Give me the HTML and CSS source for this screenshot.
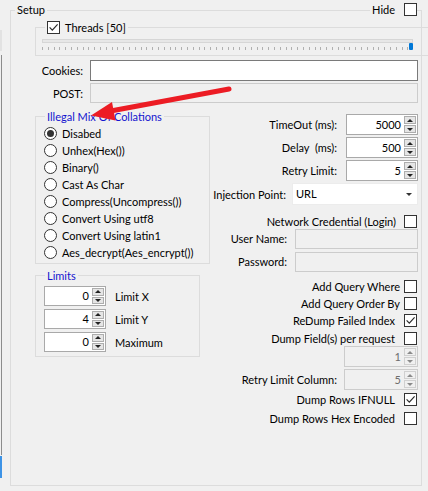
FILE: index.html
```html
<!DOCTYPE html>
<html>
<head>
<meta charset="utf-8">
<title>Setup</title>
<link rel="stylesheet" href="styles.css">
</head>
<body>
<div class="window">
  <div class="edge">
    <div class="edge-top"></div>
    <div class="edge-line"></div>
    <div class="edge-blue"></div>
  </div>

  <fieldset class="setup">
    <legend class="setup-title">Setup</legend>

    <fieldset class="threads">
      <legend class="threads-title"><span class="cb"><svg viewBox="0 0 11 11"><path d="M1.6 5.4 L4.3 8.2 L9.6 2.4"/></svg></span>Threads [50]</legend>
      <div class="slider">
        <div class="track"></div>
        <div class="ticks"></div>
        <div class="thumb"></div>
      </div>
    </fieldset>

    <div class="field-row cookies"><span class="field-label">Cookies:</span><div class="textbox"></div></div>
    <div class="field-row post"><span class="field-label">POST:</span><div class="textbox disabled"></div></div>

    <div class="columns">
      <div class="col-left">
        <fieldset class="group mix">
          <legend class="group-title">Illegal Mix Of Collations</legend>
          <div class="radio-row"><span class="radio on"></span>Disabed</div>
          <div class="radio-row"><span class="radio"></span>Unhex(Hex())</div>
          <div class="radio-row"><span class="radio"></span>Binary()</div>
          <div class="radio-row"><span class="radio"></span>Cast As Char</div>
          <div class="radio-row"><span class="radio"></span>Compress(Uncompress())</div>
          <div class="radio-row"><span class="radio"></span>Convert Using utf8</div>
          <div class="radio-row"><span class="radio"></span>Convert Using latin1</div>
          <div class="radio-row"><span class="radio"></span>Aes_decrypt(Aes_encrypt())</div>
        </fieldset>

        <fieldset class="group limits">
          <legend class="group-title">Limits</legend>
          <div class="limit-row"><div class="spin limit-spin"><span class="spin-val">0</span><span class="spin-btns"><i class="up"></i><i class="down"></i></span></div><span>Limit X</span></div>
          <div class="limit-row"><div class="spin limit-spin"><span class="spin-val">4</span><span class="spin-btns"><i class="up"></i><i class="down"></i></span></div><span>Limit Y</span></div>
          <div class="limit-row"><div class="spin limit-spin"><span class="spin-val">0</span><span class="spin-btns"><i class="up"></i><i class="down"></i></span></div><span>Maximum</span></div>
        </fieldset>
      </div>

      <div class="col-right">
        <div class="r-row r-spin r-timeout"><span>TimeOut (ms):</span><div class="spin"><span class="spin-val">5000</span><span class="spin-btns"><i class="up"></i><i class="down"></i></span></div></div>
        <div class="r-row r-spin r-next"><span>Delay&nbsp; (ms):</span><div class="spin"><span class="spin-val">500</span><span class="spin-btns"><i class="up"></i><i class="down"></i></span></div></div>
        <div class="r-row r-spin r-next"><span>Retry Limit:</span><div class="spin"><span class="spin-val">5</span><span class="spin-btns"><i class="up"></i><i class="down"></i></span></div></div>
        <div class="r-row r-inject"><span>Injection Point:</span><div class="combo"><span class="combo-text">URL</span><span class="combo-btn"></span></div></div>
        <div class="r-row r-check r-netcred"><span>Network Credential (Login)</span><span class="cb"></span></div>
        <div class="r-row r-cred r-user"><span>User Name:</span><div class="textbox disabled cred-box"></div></div>
        <div class="r-row r-cred r-next"><span>Password:</span><div class="textbox disabled cred-box"></div></div>
        <div class="r-row r-check tight r-where"><span>Add Query Where</span><span class="cb"></span></div>
        <div class="r-row r-check tight r-order"><span>Add Query Order By</span><span class="cb"></span></div>
        <div class="r-row r-check r-redump"><span>ReDump Failed Index</span><span class="cb"><svg viewBox="0 0 11 11"><path d="M1.6 5.4 L4.3 8.2 L9.6 2.4"/></svg></span></div>
        <div class="r-row r-check r-perreq"><span>Dump Field(s) per request</span><span class="cb"></span></div>
        <div class="r-row r-spin r-one"><div class="spin off wide"><span class="spin-val">1</span><span class="spin-btns"><i class="up"></i><i class="down"></i></span></div></div>
        <div class="r-row r-spin r-next r-retrycol"><span>Retry Limit Column:</span><div class="spin off wide"><span class="spin-val">5</span><span class="spin-btns"><i class="up"></i><i class="down"></i></span></div></div>
        <div class="r-row r-check r-ifnull"><span>Dump Rows IFNULL</span><span class="cb"><svg viewBox="0 0 11 11"><path d="M1.6 5.4 L4.3 8.2 L9.6 2.4"/></svg></span></div>
        <div class="r-row r-check r-hex"><span>Dump Rows Hex Encoded</span><span class="cb"></span></div>
      </div>
    </div>
  </fieldset>

  <label class="hide-toggle"><span>Hide</span><span class="cb"></span></label>

  <svg class="arrow" viewBox="0 0 428 491" width="428" height="491">
    <line x1="229" y1="89" x2="108" y2="111.5" stroke="#ec1c24" stroke-width="5" stroke-linecap="round"/>
    <polygon points="91,115.5 112,102 115.5,120.5" fill="#ec1c24"/>
  </svg>
</div>
</body>
</html>
```

FILE: styles.css
```css
* { box-sizing: border-box; }

html, body {
  margin: 0;
  padding: 0;
}

body {
  background: #f0f0f0;
  font-family: Lato, "Liberation Sans", sans-serif;
  font-size: 11px;
  color: #000;
  width: 428px;
  height: 491px;
  overflow: hidden;
}

.window {
  position: relative;
  display: flex;
  width: 428px;
  height: 491px;
}

/* cut-off control on the left edge */
.edge {
  width: 10px;
  flex: none;
  display: flex;
  flex-direction: column;
}
.edge-top {
  margin-top: 30px;
  width: 2px;
  height: 21px;
  background: #e2e2e2;
}
.edge-line {
  margin-top: 4px;
  margin-left: 1px;
  width: 1px;
  height: 400px;
  background: #8c8c8c;
}
.edge-blue {
  margin-top: 1px;
  width: 2px;
  height: 22px;
  background: #3d93e6;
}

/* group boxes */
fieldset {
  margin: 0;
  padding: 0;
  min-width: 0;
  border: 1px solid #dcdcdc;
}

.setup {
  margin-top: 4px;
  width: 412px;
  height: 482px;
  flex: none;
}
.setup-title {
  margin-left: 4px;
  padding: 0 2px;
  line-height: 12px;
}

.threads {
  margin: 5px 0 0 24px;
  width: 400px;
  height: 35px;
}
.threads-title {
  margin-left: 9px;
  padding: 0 2px;
  display: flex;
  align-items: center;
  gap: 5px;
  height: 13px;
  line-height: 13px;
}

.slider {
  position: relative;
  margin-left: 6px;
  width: 371px;
  height: 21px;
}
.track {
  margin-top: 5px;
  height: 4px;
  border: 1px solid #d6d6d6;
  background: #e7e7e7;
}
.ticks {
  margin-top: 4px;
  height: 3px;
  background: repeating-linear-gradient(to right, #b0b0b0 0 1px, transparent 1px 5.8px);
}
.thumb {
  position: absolute;
  right: 0;
  top: 4px;
  width: 4px;
  height: 7px;
  background: #0078d7;
  border-radius: 1px;
}

/* text fields */
.field-row {
  display: flex;
  align-items: center;
  gap: 7px;
}
.cookies { margin-top: 4px; }
.post { margin-top: 2px; }
.field-label {
  width: 72px;
  text-align: right;
}
.textbox {
  width: 328px;
  height: 21px;
  background: #fff;
  border: 1px solid #7a7a7a;
}
.textbox.disabled {
  background: #f0f0f0;
  border-color: #cccccc;
  height: 20px;
}

/* columns */
.columns {
  display: flex;
}
.col-left {
  flex: none;
  width: 198px;
  padding-left: 24px;
}
.group-title {
  margin-left: 9px;
  padding: 0 2px;
  line-height: 13px;
  color: #1414cf;
}
.mix {
  margin-top: 7px;
  width: 175px;
  padding: 2px 0 2px;
}
.radio-row {
  display: flex;
  align-items: center;
  gap: 5px;
  height: 17px;
  padding-left: 8px;
}
.radio {
  width: 13px;
  height: 13px;
  border-radius: 50%;
  border: 1px solid #333;
  background: #fff;
  display: flex;
  align-items: center;
  justify-content: center;
  flex: none;
}
.radio.on::after {
  content: "";
  width: 7px;
  height: 7px;
  border-radius: 50%;
  background: #333;
}

.limits {
  margin-top: 5px;
  width: 165px;
  padding: 4px 0 4px;
}
.limit-row {
  display: flex;
  align-items: center;
  gap: 9px;
  padding-left: 8px;
  height: 20px;
}
.limit-row + .limit-row { margin-top: 3px; }

/* spin boxes */
.spin {
  display: flex;
  width: 72px;
  height: 21px;
  border: 1px solid #a9a9a9;
  background: #fff;
  padding: 1px;
  flex: none;
}
.limit-spin {
  width: 62px;
  height: 20px;
}
.spin-val {
  flex: 1;
  text-align: right;
  padding-right: 3px;
  line-height: 17px;
}
.limit-spin .spin-val { line-height: 16px; }
.spin-btns {
  width: 12px;
  display: flex;
  flex-direction: column;
  gap: 1px;
}
.spin-btns i {
  flex: 1;
  background: #e5e5e5;
  border: 1px solid #adadad;
  display: flex;
  align-items: center;
  justify-content: center;
}
.spin-btns i::before {
  content: "";
  border-left: 3px solid transparent;
  border-right: 3px solid transparent;
}
.spin-btns .up::before { border-bottom: 3px solid #222; }
.spin-btns .down::before { border-top: 3px solid #222; }

.spin.off {
  background: #f0f0f0;
  border-color: #cccccc;
  color: #6d6d6d;
}
.spin.off .spin-btns i {
  background: #f0f0f0;
  border-color: #d0d0d0;
}
.spin.off .up::before { border-bottom-color: #8a8a8a; }
.spin.off .down::before { border-top-color: #8a8a8a; }
.spin.wide { width: 74px; }

/* right column */
.col-right {
  flex: 1;
  display: flex;
  flex-direction: column;
  padding-right: 3px;
}
.r-row {
  display: flex;
  justify-content: flex-end;
  align-items: center;
}
.r-spin {
  gap: 9px;
  height: 21px;
}
.r-timeout { margin-top: 11px; }
.r-next { margin-top: 2px; }
.r-retrycol { gap: 7px; }
.r-inject {
  margin-top: 2px;
  height: 22px;
  gap: 6px;
}
.combo {
  width: 126px;
  height: 22px;
  display: flex;
  background: #fff;
  border: 1px solid #ececec;
}
.combo-text {
  flex: 1;
  padding-left: 3px;
  line-height: 20px;
}
.combo-btn {
  width: 16px;
  display: flex;
  align-items: center;
  justify-content: center;
}
.combo-btn::before {
  content: "";
  border-left: 3px solid transparent;
  border-right: 3px solid transparent;
  border-top: 3px solid #333;
}

.r-check {
  height: 13px;
  gap: 9px;
  padding-right: 1px;
}
.r-check.tight { gap: 4px; }
.r-netcred { margin-top: 10px; gap: 8px; }
.r-cred {
  height: 21px;
  gap: 8px;
}
.cred-box {
  width: 123px;
  height: 21px;
}
.r-where { margin-top: 8px; }
.r-order { margin-top: 4px; }
.r-redump { margin-top: 4px; }
.r-perreq { margin-top: 5px; }
.r-one { margin-top: 1px; }
.r-ifnull { margin-top: 3px; }
.r-hex { margin-top: 6px; }

/* checkbox */
.cb {
  width: 13px;
  height: 13px;
  border: 1px solid #333;
  background: #fff;
  flex: none;
  display: inline-flex;
  align-items: center;
  justify-content: center;
}
.cb svg {
  width: 11px;
  height: 11px;
}
.cb path {
  fill: none;
  stroke: #2b2b2b;
  stroke-width: 1.2;
}

/* Hide toggle sits over the group border */
.hide-toggle {
  position: absolute;
  top: 2px;
  right: 11px;
  display: flex;
  align-items: center;
  gap: 9px;
  padding-left: 2px;
  height: 14px;
  background: #f0f0f0;
}

/* red annotation arrow */
.arrow {
  position: absolute;
  left: 0;
  top: 0;
  pointer-events: none;
}
```
